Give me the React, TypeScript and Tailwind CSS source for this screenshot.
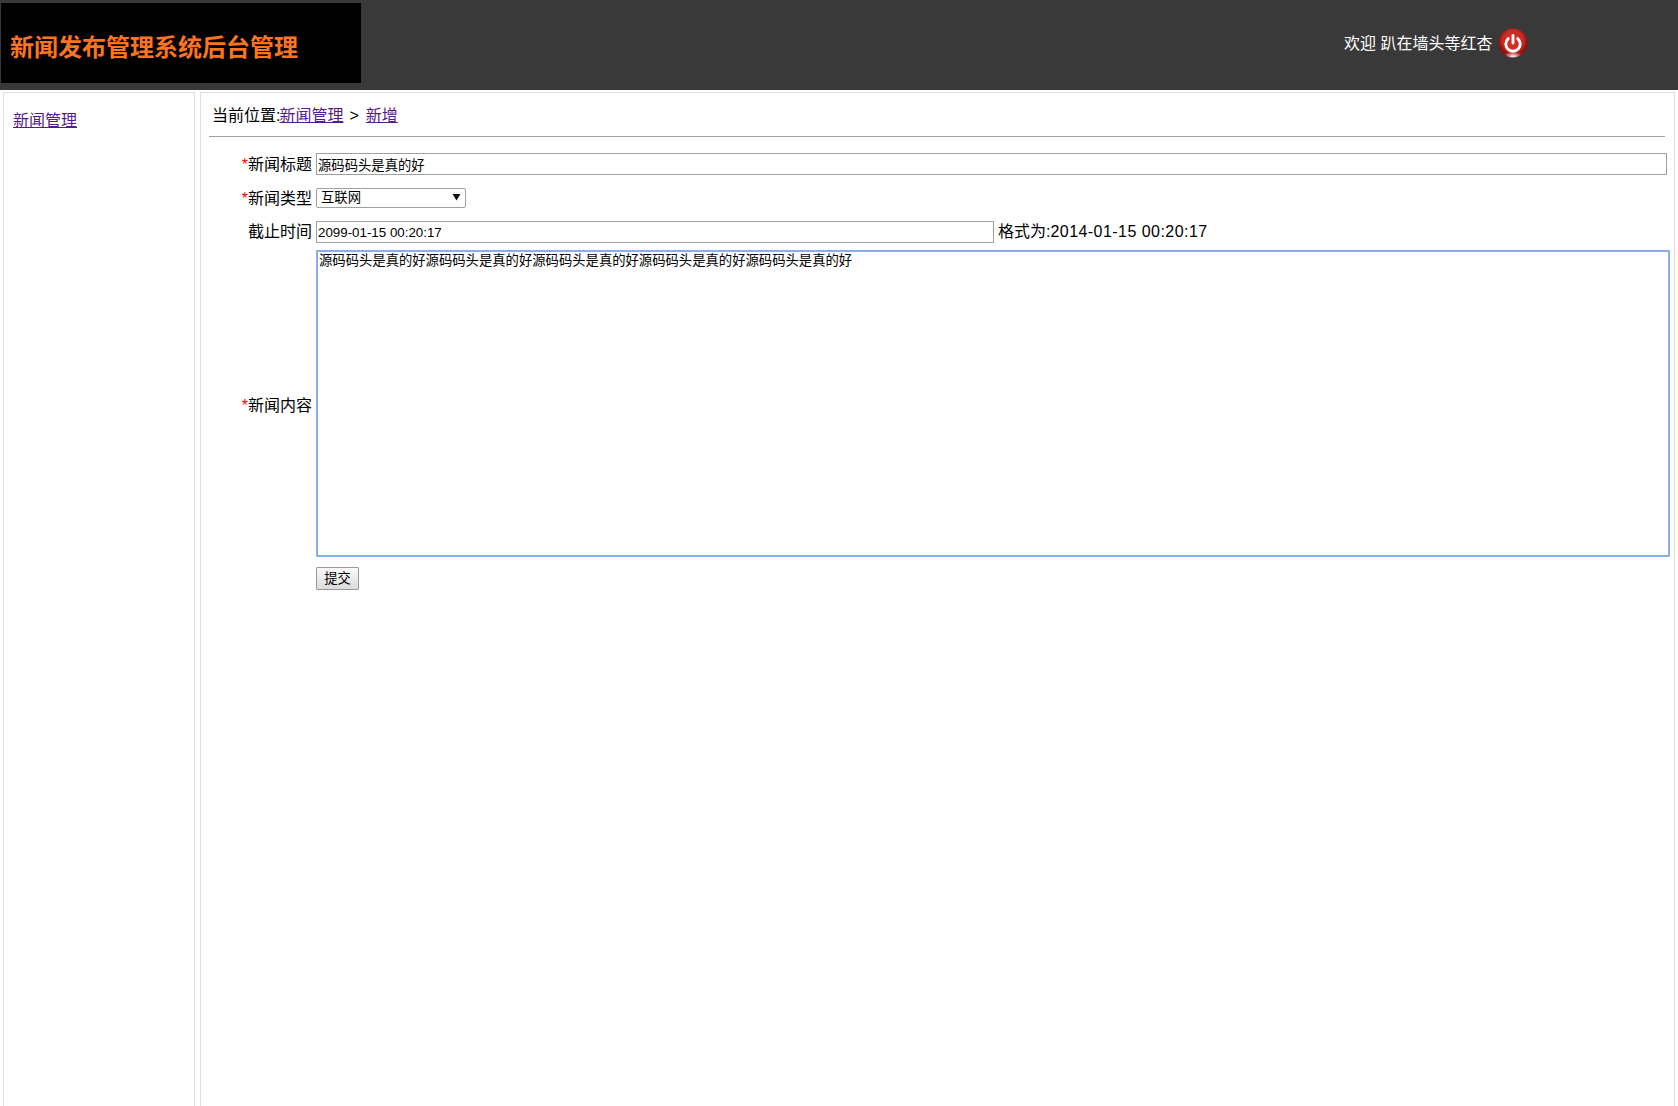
import React from 'react'

const font = "font-['Liberation_Sans','Noto_Sans_CJK_SC',sans-serif]"

function PowerIcon() {
  return (
    <svg width="30" height="30" viewBox="0 0 30 30">
      <defs>
        <radialGradient id="red" cx="50%" cy="42%" r="58%">
          <stop offset="0%" stopColor="#d8322a" />
          <stop offset="60%" stopColor="#cb2b25" />
          <stop offset="86%" stopColor="#8c0e0e" />
          <stop offset="100%" stopColor="#a81616" />
        </radialGradient>
        <radialGradient id="shine" cx="50%" cy="85%" r="60%">
          <stop offset="0%" stopColor="#ffffff" stopOpacity="0.95" />
          <stop offset="100%" stopColor="#ffffff" stopOpacity="0" />
        </radialGradient>
      </defs>
      <circle cx="15" cy="15" r="14.6" fill="url(#red)" />
      <ellipse cx="15" cy="25.5" rx="8" ry="4" fill="url(#shine)" />
      <path d="M10.3 10.6a7.2 7.2 0 1 0 9.4 0" fill="none" stroke="#fff" strokeWidth="2.8" strokeLinecap="round" />
      <path d="M15 7.5v7.5" stroke="#fff" strokeWidth="2.8" strokeLinecap="round" />
    </svg>
  )
}

function Label({ text, required, className = '' }: { text: string; required?: boolean; className?: string }) {
  return (
    <label className={`w-[107px] shrink-0 pr-[4px] text-right text-[16px] leading-[18px] text-black ${className}`}>
      {required && <span className="text-[#ff0000]">*</span>}
      {text}
    </label>
  )
}

export default function App() {
  return (
    <div className={`${font} flex h-[1106px] flex-col overflow-hidden bg-white`}>
      <header className="flex h-[90px] shrink-0 bg-[#393939]">
        <div className="ml-px mt-[3px] flex h-[80px] w-[360px] items-center bg-black pl-[9px] pt-[9px]">
          <h1 className="text-[24px] font-bold leading-none text-[#fb7420]">新闻发布管理系统后台管理</h1>
        </div>
        <div className="ml-[983px] flex h-[85px] items-center gap-[6px] text-[16px] text-white">
          <span className="pt-[2px]">欢迎 趴在墙头等红杏</span>
          <PowerIcon />
        </div>
      </header>

      <div className="flex flex-1 pl-[3px] pr-[3px] pt-[2px]">
        <aside className="w-[192px] shrink-0 border-x border-t border-[#e0e0e0] pl-[9px] pt-[16px]">
          <a href="#" className="text-[16px] leading-[20px] text-[#551a8b] underline">新闻管理</a>
        </aside>

        <main className="ml-[5px] flex-1 border-x border-t border-[#e0e0e0] pl-[8px]">
          <div className="mr-[9px] h-[44px] border-b border-[#a0a0a0] pl-[3px] pt-[13px] text-[16px] leading-[20px] text-black">
            当前位置:<a href="#" className="-ml-px text-[#551a8b] underline">新闻管理</a>
            <span className="ml-[6px] mr-[7px]">&gt;</span>
            <a href="#" className="text-[#551a8b] underline">新增</a>
          </div>

          <form className="flex flex-col">
            <div className="mt-[16px] flex h-[22px] items-center">
              <Label text="新闻标题" required className="pt-[2px]" />
              <input
                readOnly
                value="源码码头是真的好"
                className="h-[22px] w-[1351px] border border-[#a0a0a0] px-px text-[13.33px] text-black outline-none"
              />
            </div>

            <div className="mt-[13px] flex h-[20px] items-center">
              <Label text="新闻类型" required className="pt-[2px]" />
              <div className="relative h-[20px] w-[150px]">
                <select className="block h-[20px] w-full appearance-none rounded-[2px] border border-[#a0a0a0] bg-white pl-[4px] text-[13.33px] leading-[16px] text-black outline-none">
                  <option>互联网</option>
                </select>
                <svg className="absolute right-[5px] top-[5px]" width="9" height="8" viewBox="0 0 9 8">
                  <path d="M0.5 1h8L4.5 7.5z" fill="#111" />
                </svg>
              </div>
            </div>

            <div className="mt-[13px] flex h-[22px] items-center">
              <Label text="截止时间" />
              <input
                readOnly
                value="2099-01-15 00:20:17"
                className="h-[22px] w-[678px] border border-[#a0a0a0] px-px text-[13.33px] text-black outline-none"
              />
              <span className="ml-[4px] text-[16px] text-black">
                格式为:<span className="tracking-[0.45px]">2014-01-15 00:20:17</span>
              </span>
            </div>

            <div className="mt-[7px] flex h-[307px] items-center">
              <Label text="新闻内容" required className="pt-[4px]" />
              <textarea
                readOnly
                value="源码码头是真的好源码码头是真的好源码码头是真的好源码码头是真的好源码码头是真的好"
                className="h-[307px] w-[1354px] resize-none rounded-[1px] border-2 border-[#8aaee9] px-px pb-0 pt-px text-[13.33px] leading-[16px] text-black outline-none"
              />
            </div>

            <div className="ml-[107px] mt-[10px]">
              <button
                type="button"
                className="block h-[23px] w-[43px] rounded-[1px] border border-[#999999] bg-gradient-to-b from-[#fafafa] to-[#dcdcdc] text-[13.33px] leading-none text-black"
              >
                提交
              </button>
            </div>
          </form>
        </main>
      </div>
    </div>
  )
}
